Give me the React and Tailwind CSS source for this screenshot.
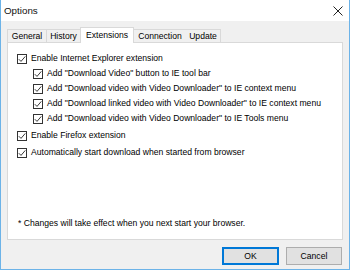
import React from 'react';

const Check = () => (
  <span className="w-[10px] h-[10px] border border-[#333333] bg-white flex items-center justify-center shrink-0">
    <svg width="8" height="8" viewBox="0 0 8 8">
      <polyline points="0.8,4.2 3,6.4 7.3,1.4" fill="none" stroke="#222" strokeWidth="0.9" />
    </svg>
  </span>
);

const Row = ({ label, sub, className = '' }) => (
  <div className={`h-[15px] flex items-center gap-[4px] ${sub ? 'pl-[25px]' : 'pl-[9px]'} ${className}`}>
    <Check />
    <span>{label}</span>
  </div>
);

export default function App() {
  const tabs = [
    { name: 'General', w: 'w-[39px]', cls: 'border-l border-t' },
    { name: 'History', w: 'w-[34px]', cls: 'border-l border-t' },
    { name: 'Extensions', w: 'w-[54px]', cls: 'border-l border-t border-r', active: true },
    { name: 'Connection', w: 'w-[52px]', cls: 'border-t' },
    { name: 'Update', w: 'w-[35px]', cls: 'border-t border-r' },
  ];

  return (
    <div
      className="w-[350px] h-[270px] flex flex-col bg-[#f0f0f0] border-x border-b border-[#6cb3e8] text-[#000] text-[8.6px] leading-none"
      style={{ fontFamily: '"Liberation Sans", Arial, sans-serif' }}
    >
      {/* Title bar */}
      <div className="h-[21px] bg-white flex items-center justify-between pl-[3px] pr-[6px] shrink-0">
        <span className="text-[9.8px] text-[#111]">Options</span>
        <svg width="10" height="10" viewBox="0 0 10 10">
          <path d="M0.5 0.5 L9.5 9.5 M9.5 0.5 L0.5 9.5" stroke="#222" strokeWidth="1" />
        </svg>
      </div>

      <div className="flex-1 flex flex-col px-[6px] pt-[6px] pb-[5px]">
        {/* Tabs */}
        <div className="flex items-end h-[15px] relative z-10">
          {tabs.map((t) => (
            <div
              key={t.name}
              className={`${t.w} ${t.cls} border-[#d9d9d9] flex items-center justify-center ${
                t.active ? 'h-[16px] -mb-px bg-white' : 'h-[13px] bg-[#f0f0f0]'
              }`}
            >
              {t.name}
            </div>
          ))}
        </div>

        {/* Panel */}
        <div className="h-[198px] bg-white border border-[#d9d9d9] flex flex-col pt-[8px] text-[#000]">
          <Row label="Enable Internet Explorer extension" />
          <Row sub label={'Add "Download Video" button to IE tool bar'} />
          <Row sub label={'Add "Download video with Video Downloader" to IE context menu'} />
          <Row sub label={'Add "Download linked video with Video Downloader" to IE context menu'} />
          <Row sub label={'Add "Download video with Video Downloader" to IE Tools menu'} />
          <Row label="Enable Firefox extension" className="mt-[2px]" />
          <Row label="Automatically start download when started from browser" className="mt-[2px]" />
          <div className="mt-[56px] pl-[10px] h-[15px] flex items-center">
            * Changes will take effect when you next start your browser.
          </div>
        </div>

        {/* Buttons */}
        <div className="flex justify-end gap-[7px] mt-[7px] pr-[1px]">
          <button className="w-[57px] h-[18px] bg-[#e1e1e1] border border-[#0078d7] shadow-[inset_0_0_0_1px_#0078d7] flex items-center justify-center">
            OK
          </button>
          <button className="w-[56px] h-[18px] bg-[#e1e1e1] border border-[#adadad] flex items-center justify-center">
            Cancel
          </button>
        </div>
      </div>
    </div>
  );
}
